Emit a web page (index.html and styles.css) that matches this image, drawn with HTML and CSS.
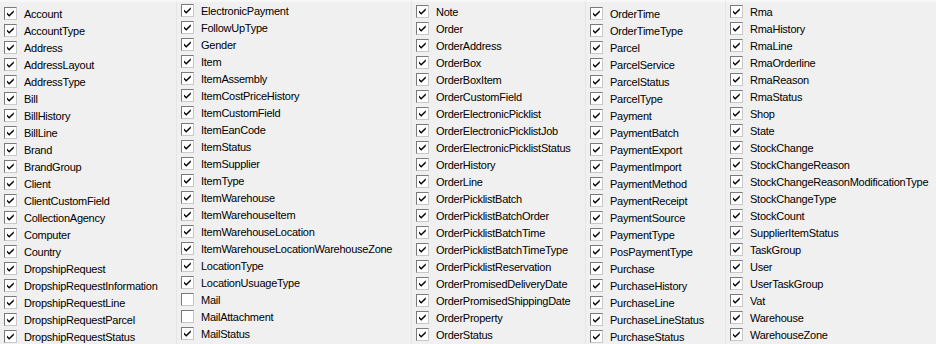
FILE: index.html
```html
<!DOCTYPE html>
<html>
	<head>
		<title>Tabellen</title>
		<link rel="stylesheet" href="styles.css">
	</head>
	<body>
		<div class="lists" id="lists"></div>

		<script>
			// Kolommen met tabelnamen, "-" ervoor = niet aangevinkt
			const columns = [
				["Account", "AccountType", "Address", "AddressLayout", "AddressType", "Bill", "BillHistory", "BillLine", "Brand", "BrandGroup", "Client", "ClientCustomField", "CollectionAgency", "Computer", "Country", "DropshipRequest", "DropshipRequestInformation", "DropshipRequestLine", "DropshipRequestParcel", "DropshipRequestStatus"],
				["ElectronicPayment", "FollowUpType", "Gender", "Item", "ItemAssembly", "ItemCostPriceHistory", "ItemCustomField", "ItemEanCode", "ItemStatus", "ItemSupplier", "ItemType", "ItemWarehouse", "ItemWarehouseItem", "ItemWarehouseLocation", "ItemWarehouseLocationWarehouseZone", "LocationType", "LocationUsuageType", "-Mail", "-MailAttachment", "MailStatus"],
				["Note", "Order", "OrderAddress", "OrderBox", "OrderBoxItem", "OrderCustomField", "OrderElectronicPicklist", "OrderElectronicPicklistJob", "OrderElectronicPicklistStatus", "OrderHistory", "OrderLine", "OrderPicklistBatch", "OrderPicklistBatchOrder", "OrderPicklistBatchTime", "OrderPicklistBatchTimeType", "OrderPicklistReservation", "OrderPromisedDeliveryDate", "OrderPromisedShippingDate", "OrderProperty", "OrderStatus"],
				["OrderTime", "OrderTimeType", "Parcel", "ParcelService", "ParcelStatus", "ParcelType", "Payment", "PaymentBatch", "PaymentExport", "PaymentImport", "PaymentMethod", "PaymentReceipt", "PaymentSource", "PaymentType", "PosPaymentType", "Purchase", "PurchaseHistory", "PurchaseLine", "PurchaseLineStatus", "PurchaseStatus"],
				["Rma", "RmaHistory", "RmaLine", "RmaOrderline", "RmaReason", "RmaStatus", "Shop", "State", "StockChange", "StockChangeReason", "StockChangeReasonModificationType", "StockChangeType", "StockCount", "SupplierItemStatus", "TaskGroup", "User", "UserTaskGroup", "Vat", "Warehouse", "WarehouseZone"]
			];

			const check = '<svg width="13" height="13" viewBox="0 0 13 13"><path d="M3 5.5 L5.2 7.8 L9.8 3.2 L9.8 5.2 L5.2 9.8 L3 7.5 Z" fill="#000"/></svg>';

			const lists = document.getElementById("lists");
			columns.forEach((items, i) => {
				let html = "";
				items.forEach((name) => {
					const off = name.startsWith("-");
					html += `
						<div class="item">
							<span class="box">${off ? "" : check}</span>
							<span class="label">${off ? name.slice(1) : name}</span>
						</div>`;
				});
				lists.innerHTML += `<div class="col col-${i + 1}">${html}</div>`;
			});
		</script>
	</body>
</html>
```

FILE: styles.css
```css
body {
	margin: 0;
	background-color: #f0f0f0;
	font-family: "Liberation Sans", Arial, sans-serif;
	font-size: 11px;
	color: #000;
}
.lists {
	display: flex;
	height: 344px;
	overflow: hidden;
}
.col {
	box-sizing: border-box;
	padding-left: 4px;
	border-left: 1px solid #e6e6e6;
	border-top: 2px solid #f7f7f7;
}
.col-1 {
	width: 176px;
	border-left: none;
	padding-top: 3px;
}
.col-2 {
	width: 235px;
	padding-top: 0;
}
.col-3 {
	width: 174px;
	padding-top: 1px;
}
.col-4 {
	width: 140px;
	padding-top: 3px;
}
.col-5 {
	flex: 1;
	padding-top: 1px;
}
.item {
	display: flex;
	align-items: center;
	height: 17px;
	white-space: nowrap;
}
.box {
	box-sizing: border-box;
	width: 13px;
	height: 13px;
	margin-right: 7px;
	background-color: #fff;
	border: 1px solid #7a7a7a;
	border-right-color: #c8c8c8;
	border-bottom-color: #c8c8c8;
	flex: none;
	position: relative;
}
.box svg {
	position: absolute;
	left: -1px;
	top: -1px;
}
.label {
	letter-spacing: -0.25px;
}
```
